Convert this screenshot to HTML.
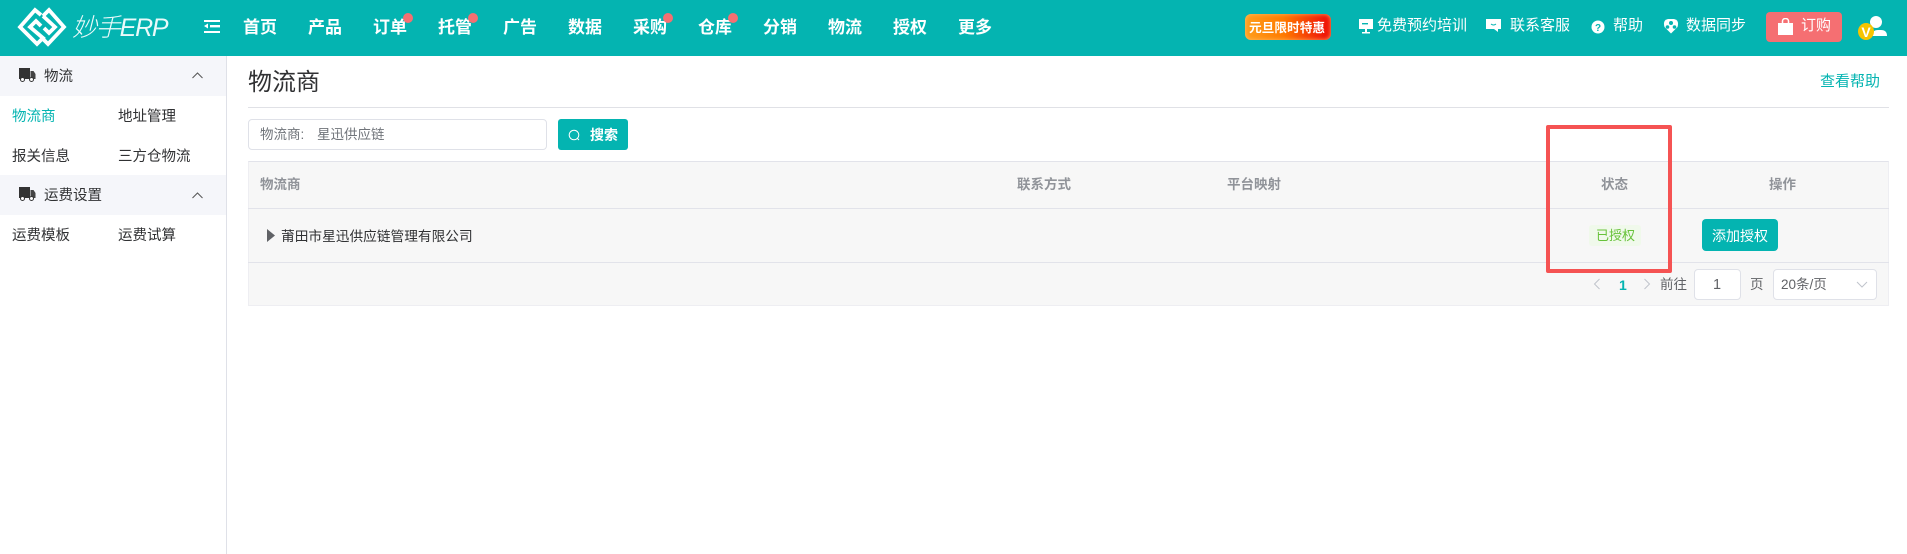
<!DOCTYPE html>
<html lang="zh"><head><meta charset="utf-8"><title>物流商</title>
<style>
html,body{margin:0;padding:0;width:1907px;height:554px;overflow:hidden;background:#fff}
body{position:relative;font-family:"Liberation Sans","Noto Sans CJK SC",sans-serif;font-size:14px;color:#303133}
.a{position:absolute}
.t{position:absolute;white-space:nowrap;line-height:20px;transform:translateY(-50%)}
.n{font-size:17px;font-weight:700;color:#fff;top:28px}
.r{font-size:15px;color:#fff;top:26px}
.d{position:absolute;width:10px;height:10px;border-radius:50%;background:#f56f72;top:13px}
.s{font-size:14.5px}
.h{color:#909399;font-weight:700;font-size:13.5px;top:185px}
</style></head><body>
<div class="a" style="left:0;top:0;width:1907px;height:56px;background:#04b4b1"></div>

<svg class="a" style="left:14px;top:6px" width="56" height="42" viewBox="0 0 56 42" fill="none" stroke="#fff" stroke-width="3.800">
<path d="M27 9 L21 4 L6 21 L23 38 L29 32 L16 21 L22 15 L27 20"/><path d="M29 10 L35 4 L50 21 L34 38 L29 33"/><path d="M29 10 L41 21 L35 27 L30 22"/></svg>
<div class="t" style="left:72px;top:28px;font-size:25px;font-style:italic;color:#eafafa;letter-spacing:-1.200px;font-weight:300">妙手ERP</div>
<svg class="a" style="left:204px;top:20px" width="16" height="13" viewBox="0 0 16 13" fill="#fff"><rect width="16" height="2"/><rect x="6" y="5" width="10" height="2.400"/><rect y="11" width="16" height="2"/><path d="M0 6 L4 3.500 V8.500Z"/></svg>

<div class="t n" style="left:243px">首页</div><div class="t n" style="left:308px">产品</div><div class="t n" style="left:373px">订单</div><div class="t n" style="left:438px">托管</div><div class="t n" style="left:503px">广告</div><div class="t n" style="left:568px">数据</div><div class="t n" style="left:633px">采购</div><div class="t n" style="left:698px">仓库</div><div class="t n" style="left:763px">分销</div><div class="t n" style="left:828px">物流</div><div class="t n" style="left:893px">授权</div><div class="t n" style="left:958px">更多</div>
<div class="d" style="left:403px"></div><div class="d" style="left:468px"></div><div class="d" style="left:663px"></div><div class="d" style="left:728px"></div>

<div class="a" style="left:1245px;top:14px;width:86px;height:26px;border-radius:6px;background:linear-gradient(90deg,#ff9f1c,#ff7a00 45%,#f01808 92%);box-shadow:inset 0 0 4px rgba(255,200,120,.8)"></div>
<div class="t" style="left:1249px;top:28px;color:#fff;font-size:12.700px;font-weight:700">元旦限时特惠</div>

<svg class="a" style="left:1359px;top:18px" width="14" height="17" viewBox="0 0 14 17" fill="#fff"><path d="M0 1h14v10H0z"/><rect x="6" y="11" width="2" height="3"/><rect x="3" y="14" width="8" height="1.500"/><rect x="3" y="5" width="6" height="1.400" fill="#04b4b1"/></svg>
<div class="t r" style="left:1377px">免费预约培训</div>
<svg class="a" style="left:1486px;top:18px" width="15" height="15" viewBox="0 0 15 15" fill="#fff"><path d="M0 1h15v10h-3v3l-4-3H0z"/><path d="M5 6q2.500 2 5 0" stroke="#04b4b1" fill="none"/></svg>
<div class="t r" style="left:1510px">联系客服</div>
<svg class="a" style="left:1591px;top:20px" width="14" height="14" viewBox="0 0 14 14"><circle cx="7" cy="7" r="6.500" fill="#fff"/><text x="7" y="11" text-anchor="middle" font-size="10" font-weight="700" fill="#04b4b1" font-family="Liberation Sans">?</text></svg>
<div class="t r" style="left:1613px">帮助</div>
<svg class="a" style="left:1663px;top:18px" width="16" height="16" viewBox="0 0 16 16"><path d="M8 15.500 L1.500 9 Q-.5 2 5 1 H11 Q16.500 2 14.500 9Z" fill="#fff"/><circle cx="8" cy="5" r="2" fill="#04b4b1"/><circle cx="4.500" cy="9" r="1.800" fill="#04b4b1"/><circle cx="11.500" cy="9" r="1.800" fill="#04b4b1"/></svg>
<div class="t r" style="left:1686px">数据同步</div>
<div class="a" style="left:1766px;top:12px;width:76px;height:30px;border-radius:4px;background:#f56f72"></div>
<svg class="a" style="left:1778px;top:18px" width="15" height="17" viewBox="0 0 15 17" fill="#fff"><path d="M0 5h15v12H0z"/><path d="M4.500 7V3a3 2.500 0 0 1 6 0V7" fill="none" stroke="#fff" stroke-width="1.500"/></svg>
<div class="t r" style="left:1801px">订购</div>
<svg class="a" style="left:1858px;top:16px" width="30" height="25" viewBox="0 0 30 25"><circle cx="18" cy="6" r="6" fill="#fff"/><path d="M14 20 Q14 14 20 14 H23 Q29 14 29 20z" fill="#fff"/><ellipse cx="8" cy="15.500" rx="8" ry="8.500" fill="#f6c400"/><text x="8" y="21" text-anchor="middle" font-size="14" font-weight="700" fill="#fff" font-family="Liberation Sans">V</text></svg>

<div class="a" style="left:226px;top:56px;width:1px;height:498px;background:#dfe1e8"></div>
<div class="a" style="left:0;top:56px;width:226px;height:40px;background:#f5f6fa"></div>
<div class="a" style="left:0;top:175px;width:226px;height:40px;background:#f5f6fa"></div>
<svg class="a" style="left:19px;top:68px" width="17" height="14" viewBox="0 0 17 14"><path d="M0 0h11v11H0z" fill="#333"/><path d="M11.500 3h3l2 3v5h-5z" fill="#444"/><circle cx="3.500" cy="11.500" r="2" fill="#fff" stroke="#333"/><circle cx="12.500" cy="11.500" r="2" fill="#fff" stroke="#333"/></svg>
<svg class="a" style="left:19px;top:187px" width="17" height="14" viewBox="0 0 17 14"><path d="M0 0h11v11H0z" fill="#333"/><path d="M11.500 3h3l2 3v5h-5z" fill="#444"/><circle cx="3.500" cy="11.500" r="2" fill="#fff" stroke="#333"/><circle cx="12.500" cy="11.500" r="2" fill="#fff" stroke="#333"/></svg>
<svg class="a" style="left:192px;top:72px" width="11" height="7" viewBox="0 0 11 7" fill="none" stroke="#555"><path d="M.5 6L5.500 1l5 5"/></svg>
<svg class="a" style="left:192px;top:192px" width="11" height="7" viewBox="0 0 11 7" fill="none" stroke="#555"><path d="M.5 6L5.500 1l5 5"/></svg>
<div class="t s" style="left:44px;top:77px">物流</div>
<div class="t s" style="left:44px;top:196px">运费设置</div>
<div class="t s" style="left:12px;top:117px;color:#04b4b1">物流商</div>
<div class="t s" style="left:118px;top:117px">地址管理</div>
<div class="t s" style="left:12px;top:157px">报关信息</div>
<div class="t s" style="left:118px;top:157px">三方仓物流</div>
<div class="t s" style="left:12px;top:236px">运费模板</div>
<div class="t s" style="left:118px;top:236px">运费试算</div>

<div class="t" style="left:248px;top:83px;font-size:24px;line-height:32px">物流商</div>
<div class="t" style="left:1820px;top:82px;font-size:15px;color:#04b4b1">查看帮助</div>
<div class="a" style="left:248px;top:107px;width:1641px;height:1px;background:#e0e1e6"></div>

<div class="a" style="left:248px;top:119px;width:299px;height:31px;box-sizing:border-box;border:1px solid #dfe1e8;border-radius:4px;background:#fff"></div>
<div class="t" style="left:260px;top:135px;font-size:13.500px;color:#70747a">物流商:</div>
<div class="t" style="left:317px;top:135px;font-size:13.500px;color:#70747a">星迅供应链</div>
<div class="a" style="left:558px;top:119px;width:70px;height:31px;border-radius:3px;background:#04b4b1"></div>
<svg class="a" style="left:568px;top:129px" width="13" height="13" viewBox="0 0 13 13" fill="none" stroke="#fff"><circle cx="6" cy="6" r="4.800"/><path d="M9.500 9.500l1.500 1.500"/></svg>
<div class="t" style="left:590px;top:135px;color:#fff;font-weight:700;font-size:14px">搜索</div>

<div class="a" style="left:248px;top:161px;width:1641px;height:145px;background:#f7f7f7;box-sizing:border-box;border:1px solid #eeeef2;border-top-color:#e2e3ea"></div>
<div class="a" style="left:248px;top:208px;width:1641px;height:1px;background:#e2e3ea"></div>
<div class="a" style="left:248px;top:262px;width:1641px;height:1px;background:#e2e3ea"></div>
<div class="t h" style="left:260px">物流商</div>
<div class="t h" style="left:1017px">联系方式</div>
<div class="t h" style="left:1227px">平台映射</div>
<div class="t h" style="left:1601px">状态</div>
<div class="t h" style="left:1769px">操作</div>
<svg class="a" style="left:267px;top:229px" width="8" height="13" viewBox="0 0 8 13"><path d="M0 0l8 6.500-8 6.500z" fill="#606266"/></svg>
<div class="t" style="left:281px;top:237px;font-size:13.700px">莆田市星迅供应链管理有限公司</div>
<div class="a" style="left:1589px;top:225px;width:52px;height:21px;border-radius:3px;background:#f0f9eb"></div>
<div class="t" style="left:1596px;top:236px;color:#67c23a;font-size:13px">已授权</div>
<div class="a" style="left:1702px;top:219px;width:76px;height:32px;border-radius:4px;background:#04b4b1"></div>
<div class="t" style="left:1712px;top:236px;color:#fff;font-size:14px">添加授权</div>

<svg class="a" style="left:1593px;top:278px" width="8" height="12" viewBox="0 0 8 12" fill="none" stroke="#c0c4cc"><path d="M6.500 1l-5 5 5 5"/></svg>
<div class="t" style="left:1619px;top:285px;color:#04b4b1;font-weight:700;font-size:14px">1</div>
<svg class="a" style="left:1643px;top:278px" width="8" height="12" viewBox="0 0 8 12" fill="none" stroke="#c0c4cc"><path d="M1.500 1l5 5-5 5"/></svg>
<div class="t" style="left:1660px;top:285px;font-size:13.500px;color:#606266">前往</div>
<div class="a" style="left:1694px;top:269px;width:47px;height:31px;box-sizing:border-box;border:1px solid #dfe1e8;border-radius:4px;background:#fff"></div>
<div class="t" style="left:1713px;top:285px;font-size:14.500px;color:#606266">1</div>
<div class="t" style="left:1750px;top:285px;font-size:13.500px;color:#606266">页</div>
<div class="a" style="left:1773px;top:269px;width:104px;height:31px;box-sizing:border-box;border:1px solid #dfe1e8;border-radius:4px;background:#fff"></div>
<div class="t" style="left:1781px;top:285px;font-size:13.500px;color:#606266">20条/页</div>
<svg class="a" style="left:1856px;top:281px" width="12" height="7" viewBox="0 0 12 7" fill="none" stroke="#c0c4cc"><path d="M1 1l5 5 5-5"/></svg>

<div class="a" style="left:1546px;top:125px;width:126px;height:148px;box-sizing:border-box;border:4px solid #f55353;border-radius:2px"></div>
</body></html>
